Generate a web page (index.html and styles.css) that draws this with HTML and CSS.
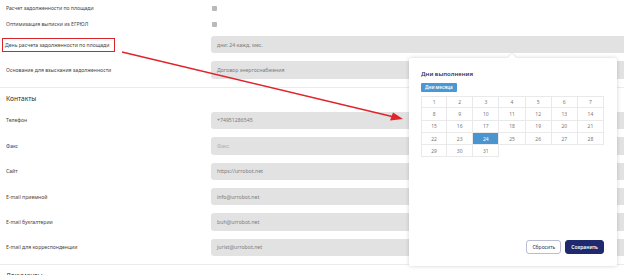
FILE: index.html
```html
<!DOCTYPE html>
<html lang="ru">
<head>
<meta charset="utf-8">
<link rel="stylesheet" href="styles.css">
</head>
<body>
<div class="page">
  <section class="group">
    <div class="row row-check"><span class="label">Расчет задолженности по площади</span><span class="checkbox"></span></div>
    <div class="row row-check"><span class="label">Оптимизация выписки из ЕГРЮЛ</span><span class="checkbox"></span></div>
    <div class="row row-input first-input"><span class="label"><span class="highlight">День расчета задолженности по площади</span></span><div class="field">дни: 24 кажд. мес.</div></div>
    <div class="row row-input"><span class="label">Основание для взыскания задолженности</span><div class="field">Договор энергоснабжения</div></div>
  </section>
  <section class="group">
    <h2 class="group-title">Контакты</h2>
    <div class="contacts">
      <div class="row row-input"><span class="label">Телефон</span><div class="field">+74951286545</div></div>
      <div class="row row-input"><span class="label">Факс</span><div class="field placeholder">Факс</div></div>
      <div class="row row-input"><span class="label">Сайт</span><div class="field">https://urrobot.net</div></div>
      <div class="row row-input"><span class="label">E-mail приемной</span><div class="field">info@urrobot.net</div></div>
      <div class="row row-input"><span class="label">E-mail бухгалтерии</span><div class="field">buh@urrobot.net</div></div>
      <div class="row row-input"><span class="label">E-mail для корреспонденции</span><div class="field">jurist@urrobot.net</div></div>
    </div>
  </section>
  <section class="group last">
    <h2 class="group-title">Документы</h2>
  </section>

  <svg class="arrow" width="624" height="275" viewBox="0 0 624 275">
    <line x1="122" y1="52" x2="392" y2="116.5" stroke="#e0242b" stroke-width="1.6"/>
    <polygon points="403,119 390,120.5 393,112.5" fill="#e0242b"/>
  </svg>

  <div class="popup">
    <div class="popup-title">Дни выполнения</div>
    <span class="badge">Дни месяца</span>
    <div class="days">
      <span>1</span><span>2</span><span>3</span><span>4</span><span>5</span><span>6</span><span>7</span>
      <span>8</span><span>9</span><span>10</span><span>11</span><span>12</span><span>13</span><span>14</span>
      <span>15</span><span>16</span><span>17</span><span>18</span><span>19</span><span>20</span><span>21</span>
      <span>22</span><span>23</span><span class="selected">24</span><span>25</span><span>26</span><span>27</span><span>28</span>
      <span>29</span><span>30</span><span>31</span>
    </div>
    <div class="actions">
      <button class="btn btn-outline">Сбросить</button>
      <button class="btn btn-primary">Сохранить</button>
    </div>
  </div>
</div>
</body>
</html>
```
FILE: styles.css
```css
html, body {
  margin: 0;
  padding: 0;
  background: #ffffff;
  overflow: hidden;
}
body {
  font-family: "Noto Sans", "Open Sans", sans-serif;
  color: #3a3a3a;
}
.page {
  position: relative;
  width: 624px;
  height: 275px;
  overflow: hidden;
}
.group {
  border-bottom: 1px solid #ececec;
  padding: 0 0 8px 6px;
  width: 640px;
}
.group.last {
  border-bottom: none;
}
.row {
  display: grid;
  grid-template-columns: 205px 1fr;
  align-items: center;
}
.label {
  font-size: 5.1px;
  color: #444444;
  white-space: nowrap;
}
.row-check {
  height: 16px;
}
.checkbox {
  width: 5px;
  height: 5px;
  background: #b9b9b9;
  border-radius: 1px;
  margin-left: 1px;
}
.first-input {
  margin-top: 4px;
}
.row-input + .row-input {
  margin-top: 8px;
}
.field {
  height: 17.4px;
  background: #e2e2e2;
  border-radius: 3px;
  display: flex;
  align-items: center;
  padding-left: 6px;
  font-size: 5.2px;
  color: #7c7c7c;
}
.field.placeholder {
  color: #b0b0b0;
}
.highlight {
  display: inline-block;
  border: 1.5px solid #d9252a;
  padding: 3px 5px 3px 2px;
  margin-left: -4px;
}
.group-title {
  margin: 0;
  padding-top: 5px;
  height: 12px;
  line-height: 12px;
  font-size: 6.6px;
  font-weight: 400;
  color: #2a2a2a;
}
.contacts {
  margin-top: 7px;
}

.arrow {
  position: absolute;
  left: 0;
  top: 0;
  pointer-events: none;
}

.popup {
  position: absolute;
  left: 409px;
  top: 58px;
  width: 208px;
  height: 208px;
  box-sizing: border-box;
  background: #ffffff;
  border-radius: 2px;
  box-shadow: 0 0 4px rgba(0,0,0,0.18);
  padding: 10px 13px 12px 12px;
  display: flex;
  flex-direction: column;
}
.popup::before {
  content: "";
  position: absolute;
  top: -3px;
  left: 100px;
  width: 6px;
  height: 6px;
  background: #ffffff;
  transform: rotate(45deg);
  box-shadow: -1px -1px 2px rgba(0,0,0,0.08);
}
.popup-title {
  font-size: 6px;
  font-weight: 600;
  color: #2d3366;
  line-height: 12px;
}
.badge {
  align-self: flex-start;
  margin-top: 3px;
  background: #4a97d3;
  color: #ffffff;
  font-size: 4.6px;
  font-weight: 600;
  line-height: 9px;
  padding: 0 4px;
  border-radius: 1px;
}
.days {
  margin-top: 4px;
  width: 183px;
  display: grid;
  grid-template-columns: repeat(7, 1fr);
  grid-auto-rows: 12.3px;
}
.days span {
  display: flex;
  align-items: center;
  justify-content: center;
  font-size: 5px;
  color: #7a7a7a;
  border-right: 1px solid #e9e9e9;
  border-bottom: 1px solid #e9e9e9;
}
.days span:nth-child(-n+7) {
  border-top: 1px solid #e9e9e9;
}
.days span:nth-child(7n+1) {
  border-left: 1px solid #e9e9e9;
}
.days span.selected {
  background: #4a94cf;
  color: #ffffff;
}
.actions {
  margin-top: auto;
  display: flex;
  justify-content: flex-end;
  gap: 4px;
}
.btn {
  font-family: "Noto Sans", "Open Sans", sans-serif;
  font-size: 5px;
  height: 14px;
  padding: 0 5px;
  border-radius: 3px;
  cursor: pointer;
}
.btn-outline {
  background: #ffffff;
  border: 1px solid #b9bcd3;
  color: #2d3366;
}
.btn-primary {
  background: #1f2a6e;
  border: 1px solid #1f2a6e;
  color: #ffffff;
  font-weight: 600;
}
```
